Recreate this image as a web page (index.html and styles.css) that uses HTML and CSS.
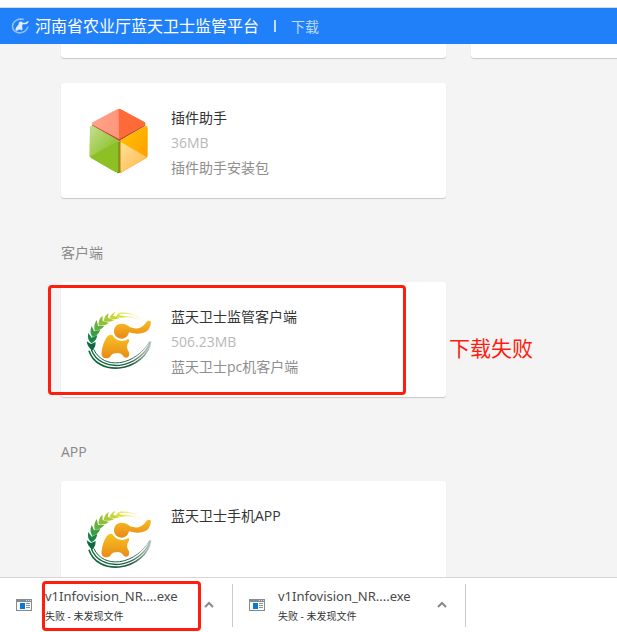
FILE: index.html
```html
<!DOCTYPE html>
<html lang="zh-CN">
<head>
<meta charset="utf-8">
<meta name="viewport" content="width=device-width, initial-scale=1">
<title>河南省农业厅蓝天卫士监管平台</title>
<link rel="stylesheet" href="styles.css">
</head>
<body>
<svg class="defs" aria-hidden="true">
  <defs>
    <linearGradient id="body-fill" x1="0" y1="0" x2="0" y2="1"><stop offset="0" stop-color="#f7c322"/><stop offset="1" stop-color="#e98a17"/></linearGradient>
    <linearGradient id="trunk-fill" x1="0" y1="0" x2="0" y2="1"><stop offset="0" stop-color="#f7bd20"/><stop offset="1" stop-color="#e88818"/></linearGradient>
    <linearGradient id="arc-fill" gradientUnits="userSpaceOnUse" x1="50" y1="190" x2="230" y2="125"><stop offset="0" stop-color="#0b6b3c"/><stop offset=".6" stop-color="#2a5c46"/><stop offset="1" stop-color="#8fa69a" stop-opacity=".5"/></linearGradient>
    <linearGradient id="tip-fill" x1="0" y1="0" x2="1" y2="0"><stop offset="0" stop-color="#e4e03a"/><stop offset="1" stop-color="#f6f0b0" stop-opacity=".2"/></linearGradient>
    <symbol id="guard-logo" viewBox="30 30 204 180">
      <path fill="none" stroke="url(#arc-fill)" stroke-width="5" d="M42 152C54 190 92 207 132 204C182 199 221 165 227 124"/>
      <path fill="none" stroke="url(#arc-fill)" stroke-width="4" d="M49 149C62 184 98 199 133 196C177 191 214 160 225 126"/>
      <path fill="none" stroke="url(#arc-fill)" stroke-width="3" d="M56 148C71 180 102 192 134 188C172 183 206 156 224 124"/>
      <path fill="#0d6a42" d="M35 124L48 132L62 126Q62 144 51 152Q37 140 35 124Z"/>
      <path fill="#198448" d="M40 99L50 113L67 105Q64 124 49 130Q35 118 40 99Z"/>
      <path fill="#3a9f43" d="M50 78L57 94L76 90Q68 108 52 111Q42 96 50 78Z"/>
      <path fill="#63b141" d="M65 60L69 77L88 78Q76 93 59 92Q55 74 65 60Z"/>
      <path fill="#8bc038" d="M82 47L83 63L102 69Q86 80 71 75Q69 59 82 47Z"/>
      <path fill="#abc936" d="M101 39L98 53L117 61Q99 69 86 63Q88 47 101 39Z"/>
      <path fill="#c6d434" d="M121 36L114 47L134 54Q117 62 103 55Q108 41 121 36Z"/>
      <path fill="#dde037" d="M139 37L132 45L154 50Q137 56 122 50Q127 40 139 37Z"/>
      <path fill="none" stroke="url(#tip-fill)" stroke-width="4" d="M136 40Q170 37 198 56"/>
      <path fill="none" stroke="url(#tip-fill)" stroke-width="3" d="M148 50Q175 48 197 60"/>
      <path fill="url(#trunk-fill)" d="M139 71Q155 71 165 82Q196 93 212 69Q219 58 228 65Q227 94 200 100Q182 103 162 97Q158 115 141 116C126 116 117 106 117 94C117 80 127 71 139 71Z"/>
      <path fill="url(#body-fill)" d="M103 105Q109 103 113 106C118 116 128 123 143 123Q153 122 160 117Q166 121 158 132Q153 144 162 157C166 173 151 180 143 166Q135 157 122 160Q110 161 106 170C94 181 76 173 80 155C83 132 92 111 103 105Z"/>
    </symbol>
    <symbol id="guard-mark" viewBox="30 30 204 180">
      <path fill="none" stroke="currentColor" stroke-opacity=".6" stroke-width="18" d="M175 47C112 28 50 67 47 120C45 180 105 207 149 194C185 187 214 155 222 127"/>
      <path fill="currentColor" d="M139 68Q155 68 165 82Q196 90 212 69L230 62Q227 94 200 100L162 100Q150 118 160 159Q150 178 135 160Q118 158 104 171C82 178 72 166 90 133L117 100C115 80 127 68 139 68Z"/>
    </symbol>
  </defs>
</svg>

<div class="top-strip"></div>
<header class="header">
  <svg class="header-logo" aria-hidden="true"><use href="#guard-mark"/></svg>
  <h1 class="header-title">河南省农业厅蓝天卫士监管平台</h1>
  <span class="header-divider"></span>
  <a class="header-link" href="#">下载</a>
</header>

<main class="content">
  <div class="grid">
    <div class="card card-end"></div>
    <div class="card card-end"></div>
    <article class="card">
      <svg class="card-icon" viewBox="0 9 204 204" aria-hidden="true">
        <defs>
          <linearGradient id="cube-top" x1="0" y1="0" x2="1" y2="0"><stop offset="0" stop-color="#ffa28b"/><stop offset="1" stop-color="#ff8a6c"/></linearGradient>
          <linearGradient id="cube-left" x1="0" y1="0" x2=".7" y2=".7"><stop offset="0" stop-color="#c5df91"/><stop offset="1" stop-color="#96c63c"/></linearGradient>
          <linearGradient id="cube-right" x1="0" y1="0" x2="1" y2="1"><stop offset="0" stop-color="#ffc400"/><stop offset="1" stop-color="#ff9800"/></linearGradient>
          <linearGradient id="cube-low" x1="0" y1="0" x2="1" y2="1"><stop offset="0" stop-color="#ffe296"/><stop offset="1" stop-color="#ffb54c"/></linearGradient>
        </defs>
        <path fill="#bf4f2b" d="M20 62L182 62L179 67L102 112L23 67Z"/>
        <path fill="#7a8c17" d="M97 113L106 112L106 206L96 208Z"/>
        <path fill="#c77d1b" d="M104 111L110 108L110 207L104 204Z"/>
        <path fill="url(#cube-top)" d="M96 16Q101 13 107 16L178 54Q184 58 179 63L102 105L23 63Q18 58 24 54Z"/>
        <path fill="#ff6a39" d="M101 14L107 16L178 54Q184 58 179 63L102 105Z"/>
        <path fill="#8cc024" d="M15 71Q16 63 24 66L94 106Q100 109 100 116L100 203Q95 207 89 203L19 163Q14 160 14 154Z"/>
        <path fill="url(#cube-left)" d="M15 71Q16 63 24 66L94 106Q99 109 99 112L14 158Z"/>
        <path fill="url(#cube-right)" d="M107 114Q107 109 112 106L179 67Q187 63 188 71L188 154Q188 160 183 163L113 203Q107 206 107 200Z"/>
        <path fill="url(#cube-low)" d="M107 114L186 160L113 203Q107 206 107 200Z"/>
      </svg>
      <div class="card-text">
        <h3 class="card-title">插件助手</h3>
        <p class="card-size">36MB</p>
        <p class="card-desc">插件助手安装包</p>
      </div>
    </article>
  </div>

  <h2 class="section-title">客户端</h2>
  <div class="grid">
    <article class="card">
      <svg class="card-icon" aria-hidden="true"><use href="#guard-logo"/></svg>
      <div class="card-text">
        <h3 class="card-title">蓝天卫士监管客户端</h3>
        <p class="card-size">506.23MB</p>
        <p class="card-desc">蓝天卫士pc机客户端</p>
      </div>
      <span class="mark mark-card"></span>
      <span class="mark-note">下载失败</span>
    </article>
  </div>

  <h2 class="section-title">APP</h2>
  <div class="grid">
    <article class="card">
      <svg class="card-icon" aria-hidden="true"><use href="#guard-logo"/></svg>
      <div class="card-text">
        <h3 class="card-title">蓝天卫士手机APP</h3>
      </div>
    </article>
  </div>
</main>

<footer class="downloads">
  <div class="download">
    <svg class="file-icon" viewBox="0 0 16 12" aria-hidden="true"><path fill="#858b90" d="M0 0H16V12H0Z"/><path fill="#f7f8f9" d="M1 3H15V11H1Z"/><path fill="#d8dcdf" d="M10 1h1v1h-1zM12 1h1v1h-1zM14 1h1v1h-1z"/><path fill="#0878d4" d="M4 4H9V10H4Z"/><path fill="#8d9296" d="M10 4h4v1h-4zM10 6h4v1h-4zM10 8h4v1h-4z"/></svg>
    <div class="file-text">
      <p class="file-name">v1Infovision_NR....exe</p>
      <p class="file-state">失败 - 未发现文件</p>
      <span class="mark mark-file"></span>
    </div>
    <button class="file-menu" type="button" aria-label="更多操作"><svg viewBox="0 0 10 7" aria-hidden="true"><path d="M1 6L5 2L9 6"/></svg></button>
  </div>
  <div class="download">
    <svg class="file-icon" viewBox="0 0 16 12" aria-hidden="true"><path fill="#858b90" d="M0 0H16V12H0Z"/><path fill="#f7f8f9" d="M1 3H15V11H1Z"/><path fill="#d8dcdf" d="M10 1h1v1h-1zM12 1h1v1h-1zM14 1h1v1h-1z"/><path fill="#0878d4" d="M4 4H9V10H4Z"/><path fill="#8d9296" d="M10 4h4v1h-4zM10 6h4v1h-4zM10 8h4v1h-4z"/></svg>
    <div class="file-text">
      <p class="file-name">v1Infovision_NR....exe</p>
      <p class="file-state">失败 - 未发现文件</p>
    </div>
    <button class="file-menu" type="button" aria-label="更多操作"><svg viewBox="0 0 10 7" aria-hidden="true"><path d="M1 6L5 2L9 6"/></svg></button>
  </div>
</footer>
</body>
</html>
```
FILE: styles.css
```css
* {
  box-sizing: border-box;
}

body {
  display: flex;
  flex-direction: column;
  height: 100vh;
  margin: 0;
  overflow: hidden;
  background: #f4f4f4;
  color: #333;
  font: 14px/25px "Open Sans", "Noto Sans CJK SC", sans-serif;
}

h1, h2, h3, p {
  margin: 0;
  font-size: inherit;
  font-weight: inherit;
}

.defs {
  position: absolute;
  width: 0;
  height: 0;
}

.top-strip {
  flex: none;
  height: 8px;
  border-bottom: 1px solid #d9d9d9;
  background: #fff;
}

.header {
  display: flex;
  flex: none;
  align-items: center;
  height: 36px;
  padding-left: 11px;
  background: #2080f9;
  color: #fff;
}

.header-logo {
  width: 18px;
  height: 16px;
  opacity: 0.85;
}

.header-title {
  margin-left: 6px;
  font-size: 16px;
}

.header-divider {
  width: 2px;
  height: 12px;
  margin: 0 15px;
  background: #c4dcfd;
}

.header-link {
  color: #bfdaff;
  text-decoration: none;
}

.content {
  flex: 1;
  min-height: 0;
  padding-left: 61px;
  overflow: hidden;
}

.grid {
  display: grid;
  grid-template-columns: repeat(2, 385px);
  gap: 25px;
}

.card {
  position: relative;
  display: flex;
  align-items: flex-start;
  height: 115px;
  border-radius: 3px;
  background: #fff;
  box-shadow: 0 1px 1px #c8c8c8;
}

.card-end {
  height: 14px;
  border-radius: 0 0 3px 3px;
}

.card-icon {
  width: 68px;
  height: 68px;
  margin: 24px 18px 0 24px;
}

.card-text {
  padding-top: 22px;
}

.card-size {
  color: #b8b8b8;
}

.card-desc {
  color: #8e8e8e;
}

.section-title {
  padding: 42px 0 17px;
  color: #888;
}

.mark {
  position: absolute;
  border: 3px solid #ff1d10;
  border-radius: 4px;
}

.mark-card {
  inset: 3px 40px 2px -13px;
}

.mark-note {
  position: absolute;
  top: 54px;
  left: 388px;
  color: #ff1d10;
  font-size: 21px;
  white-space: nowrap;
}

.downloads {
  display: flex;
  flex: none;
  height: 55px;
  padding: 6px 0 5px;
  border-top: 1px solid #d6d6d6;
  background: #fff;
}

.download {
  display: flex;
  align-items: center;
  width: 233px;
  padding-bottom: 2px;
  border-right: 1px solid #ccc;
}

.file-icon {
  width: 16px;
  height: 12px;
  margin: 0 13px 0 16px;
}

.file-text {
  position: relative;
  width: 155px;
  white-space: nowrap;
}

.file-name {
  color: #4a4a4a;
  font-family: "Noto Sans", sans-serif;
  font-size: 13px;
  line-height: 22px;
}

.file-state {
  font-size: 10px;
  line-height: 18px;
}

.mark-file {
  inset: -4px -1px -6px -3px;
}

.file-menu {
  display: flex;
  padding: 4px;
  border: 0;
  background: none;
}

.file-menu svg {
  width: 10px;
  height: 7px;
  fill: none;
  stroke: #888;
  stroke-width: 2;
}
```
